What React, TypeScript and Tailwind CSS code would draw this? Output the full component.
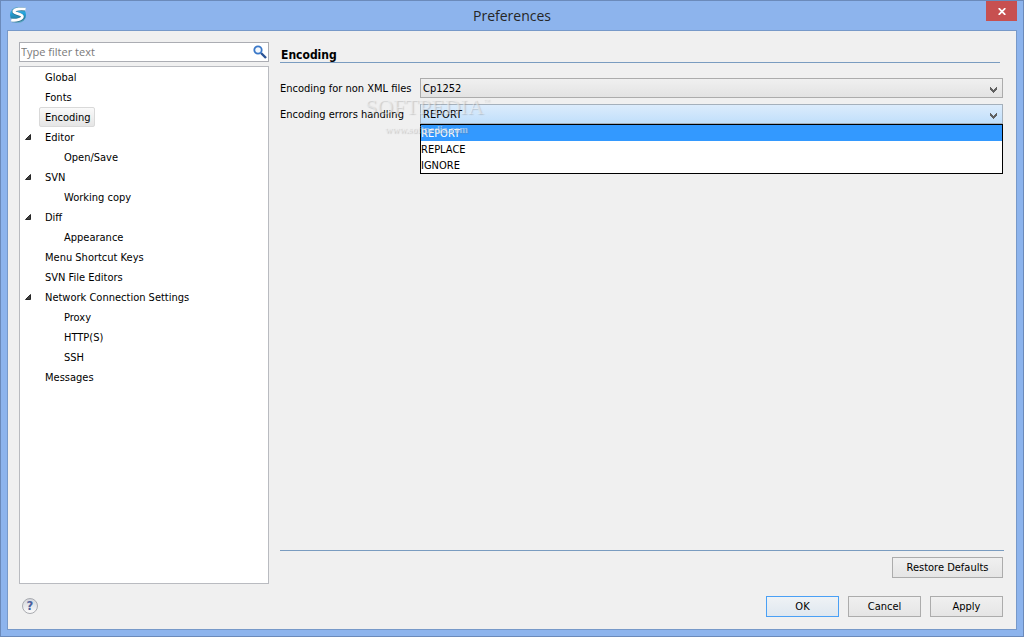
import { useState } from 'react';
import clsx from 'clsx';

interface TreeItem {
  label: string;
  children?: string[];
}

const TREE: TreeItem[] = [
  { label: 'Global' },
  { label: 'Fonts' },
  { label: 'Encoding' },
  { label: 'Editor', children: ['Open/Save'] },
  { label: 'SVN', children: ['Working copy'] },
  { label: 'Diff', children: ['Appearance'] },
  { label: 'Menu Shortcut Keys' },
  { label: 'SVN File Editors' },
  { label: 'Network Connection Settings', children: ['Proxy', 'HTTP(S)', 'SSH'] },
  { label: 'Messages' },
];

const HANDLING_OPTIONS = ['REPORT', 'REPLACE', 'IGNORE'];

function AppLogo() {
  return (
    <svg width="18" height="18" viewBox="0 0 18 18" aria-hidden="true">
      <defs>
        <linearGradient id="globe" x1="0" y1="0" x2="0" y2="1">
          <stop offset="0" stopColor="#5fa9c8" />
          <stop offset="0.4" stopColor="#22a3dc" />
          <stop offset="0.7" stopColor="#2583a8" />
          <stop offset="1" stopColor="#6fb0c8" />
        </linearGradient>
      </defs>
      <circle cx="9" cy="9" r="8" fill="url(#globe)" />
      <path
        d="M16.2 3.6C12.6 2.8 6 3 4.8 5.6C4 8 13.8 8 13.4 11C13 13.9 7 15 2.6 14.2"
        fill="none"
        stroke="#2c6f8e"
        strokeWidth="3.6"
      />
      <path
        d="M16.6 3.2C12.6 2.4 6 2.8 4.8 5.2C4 7.6 13.8 7.6 13.4 10.6C13 13.5 7 14.8 2.2 14"
        fill="none"
        stroke="#fff"
        strokeWidth="2.8"
      />
    </svg>
  );
}

function Chevron() {
  return (
    <svg
      width="7"
      height="6"
      viewBox="0 0 7 6"
      className="pointer-events-none absolute right-[6px] top-[9px]"
      shapeRendering="crispEdges"
      aria-hidden="true"
    >
      <path
        d="M0 0h1v1h1v1h1v1h1v-1h1v-1h1v-1h1v3h-1v1h-1v1h-1v1h-1v-1h-1v-1h-1v-1h-1z"
        fill="#606060"
      />
    </svg>
  );
}

function Expander() {
  return (
    <svg width="6" height="6" viewBox="0 0 6 6" aria-hidden="true">
      <path d="M5.5 0.5V5.5H0.5Z" fill="#404040" stroke="#262626" />
    </svg>
  );
}

interface TreeRowProps {
  label: string;
  nested?: boolean;
  expanded?: boolean;
  selected: boolean;
  onSelect: (label: string) => void;
}

function TreeRow({ label, nested, expanded, selected, onSelect }: TreeRowProps) {
  return (
    <div className={clsx('flex h-5 items-center', nested ? 'pl-[24px]' : 'pl-[5px]')}>
      <span className="flex w-[14px] shrink-0">{expanded && <Expander />}</span>
      <button
        onClick={() => onSelect(label)}
        className={clsx(
          'h-5 whitespace-nowrap rounded-[2px] border pl-[5px] pr-[3px] pt-[2px]',
          selected
            ? 'border-[#d9d9d9] bg-linear-to-b from-[#fafafa] to-[#e5e5e5]'
            : 'border-transparent'
        )}
      >
        {label}
      </button>
    </div>
  );
}

function PushButton({ label, className }: { label: string; className: string }) {
  return (
    <button
      className={clsx(
        'h-[21px] border bg-linear-to-b pt-px text-center',
        className
      )}
    >
      {label}
    </button>
  );
}

const GRAY_BUTTON = 'border-[#acacac] from-[#f0f0f0] to-[#e5e5e5]';

export default function App() {
  const [selected, setSelected] = useState('Encoding');
  const [filter, setFilter] = useState('');
  const [handling, setHandling] = useState('REPORT');
  const [open, setOpen] = useState(true);

  return (
    <div className="flex min-h-screen flex-col border border-[#6b8aba] bg-[#8db4ed] px-[6px] pb-[6px] font-['DejaVu_Sans_Condensed','Open_Sans',sans-serif] text-[11px] leading-4 text-black">
      {/* Title bar */}
      <header className="relative flex h-[29px] shrink-0 items-center justify-center">
        <span className="absolute left-[2px] top-[5px]">
          <AppLogo />
        </span>
        <h1 className="font-['Open_Sans'] text-[14px] leading-5 text-[#262626]">Preferences</h1>
        <button
          aria-label="Close"
          className="absolute right-0 top-0 flex h-5 w-[31px] items-center justify-center bg-[#c75050]"
        >
          <svg width="8" height="7" viewBox="0 0 8 7" aria-hidden="true">
            <path d="M0.7 0.2L7.3 6.8M7.3 0.2L0.7 6.8" stroke="#fff" strokeWidth="1.8" />
          </svg>
        </button>
      </header>

      <main className="flex flex-1 flex-col border border-[#7799c9] bg-[#f0f0f0] pb-3 pl-[11px] pr-[13px] pt-[11px]">
        <div className="flex flex-1 gap-[11px]">
          {/* Page tree */}
          <nav className="flex w-[250px] shrink-0 flex-col gap-1">
            <div className="flex h-5 items-center border border-[#abadb3] bg-white pl-px pr-px">
              <input
                type="text"
                aria-label="Filter"
                placeholder="Type filter text"
                value={filter}
                onChange={(e) => setFilter(e.target.value)}
                className="h-4 min-w-0 flex-1 font-['Open_Sans'] outline-none placeholder:text-[#7a7a7a]"
              />
              <svg width="14" height="14" viewBox="0 0 14 14" aria-hidden="true">
                <path d="M8 8L13 13" stroke="#2a5394" strokeWidth="2.4" />
                <circle cx="5" cy="5" r="3.7" fill="#f4f8fd" stroke="#3a78c8" strokeWidth="1.8" />
              </svg>
            </div>
            <div className="flex-1 border border-[#b9bbc0] bg-white">
              {TREE.map((item) => (
                <div key={item.label}>
                  <TreeRow
                    label={item.label}
                    expanded={!!item.children}
                    selected={selected === item.label}
                    onSelect={setSelected}
                  />
                  {item.children?.map((child) => (
                    <TreeRow
                      key={child}
                      label={child}
                      nested
                      selected={selected === child}
                      onSelect={setSelected}
                    />
                  ))}
                </div>
              ))}
            </div>
          </nav>

          {/* Encoding page */}
          <section className="relative flex min-w-0 flex-1 flex-col pb-[6px]">
            <h2 className="mr-[3px] flex h-[21px] items-end border-b border-[#7a9cc0] pl-px text-[12px] font-bold leading-[14px]">
              Encoding
            </h2>

            <div className="mt-[15px] grid grid-cols-[140px_1fr] items-center gap-y-[6px]">
              <label htmlFor="encoding" className="pt-[2px]">
                Encoding for non XML files
              </label>
              <div className="relative">
                <select
                  id="encoding"
                  className="block h-5 w-full appearance-none border border-[#acacac] bg-linear-to-b from-[#f0f0f0] to-[#e3e3e3] pl-[2px] pt-[2px]"
                >
                  <option>Cp1252</option>
                </select>
                <Chevron />
              </div>

              <label htmlFor="handling" className="pt-[2px]">
                Encoding errors handling
              </label>
              <div className="relative">
                <select
                  id="handling"
                  value={handling}
                  onChange={(e) => setHandling(e.target.value)}
                  className="block h-5 w-full appearance-none border border-[#a5b0bb] bg-linear-to-b from-[#dcecfc] to-[#c1dffb] pl-[2px] pt-[2px]"
                >
                  {HANDLING_OPTIONS.map((option) => (
                    <option key={option}>{option}</option>
                  ))}
                </select>
                <Chevron />
                {open && (
                  <ul
                    role="listbox"
                    aria-label="Encoding errors handling"
                    className="absolute left-0 right-0 top-full border border-black bg-white"
                  >
                    {HANDLING_OPTIONS.map((option) => (
                      <li
                        key={option}
                        role="option"
                        aria-selected={option === handling}
                        onClick={() => {
                          setHandling(option);
                          setOpen(false);
                        }}
                        className={clsx(
                          'h-4 leading-[18px]',
                          option === handling && 'bg-[#3399ff] text-white'
                        )}
                      >
                        {option}
                      </li>
                    ))}
                  </ul>
                )}
              </div>
            </div>

            {/* Watermark */}
            <div
              aria-hidden="true"
              className="pointer-events-none absolute left-[85px] top-[53px] font-['Liberation_Serif',serif] text-[#f4f4f4]/50 [text-shadow:1px_1px_1px_rgba(120,120,120,0.3)]"
            >
              <p className="flex items-start text-[22px] leading-6">
                SOFTPEDIA<span className="text-[6px] leading-3">™</span>
              </p>
              <p className="pl-5 pt-[3px] text-[10px] font-bold leading-4">www.softpedia.com</p>
            </div>

            <div className="-mr-px mt-auto border-t border-[#7a9cc0]" />
            <PushButton
              label="Restore Defaults"
              className={clsx('mt-[6px] w-[111px] self-end', GRAY_BUTTON)}
            />
          </section>
        </div>

        {/* Dialog buttons */}
        <footer className="mt-3 flex items-start gap-[9px]">
          <button
            aria-label="Help"
            className="ml-[3px] mr-auto mt-[2px] flex h-4 w-4 items-center justify-center rounded-full border border-[#a9abb0] bg-linear-to-b from-[#d4d6dc] to-[#fbfbfb] text-[13px] font-bold leading-4 text-[#4a5f9e]"
          >
            ?
          </button>
          <PushButton label="OK" className="w-[73px] border-[#4aa0f5] from-[#eff2f5] to-[#dfe8f0]" />
          <PushButton label="Cancel" className={clsx('w-[73px]', GRAY_BUTTON)} />
          <PushButton label="Apply" className={clsx('w-[73px]', GRAY_BUTTON)} />
        </footer>
      </main>
    </div>
  );
}
